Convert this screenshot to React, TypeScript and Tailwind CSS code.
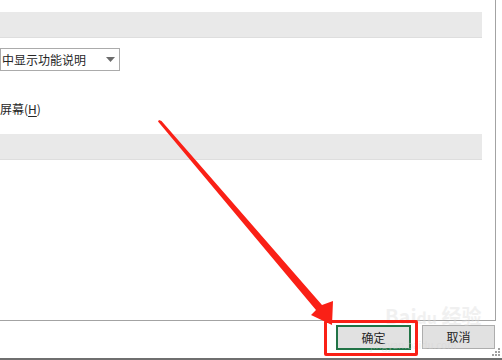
const cjk = { fontFamily: '"Noto Sans CJK SC", "Noto Sans", sans-serif' };

function Band() {
  return <div className="h-[26px] w-[482px] border-b border-[#dedede] bg-[#e9e9e9]" />;
}

function Arrow() {
  // red annotation arrow pointing at the OK button
  return (
    <svg className="pointer-events-none absolute left-0 top-0" width="502" height="360">
      <polygon
        points="159,120 161.5,121 322,305 333,301 332,325 311,315 316,310 158,121.5"
        fill="#fa2016"
      />
    </svg>
  );
}

export default function App() {
  return (
    <div className="relative flex h-[360px] w-[502px] flex-col overflow-hidden bg-white text-[#262626]" style={cjk}>
      {/* options panel */}
      <div className="h-[321px] w-[496px] shrink-0 border-b border-r border-[#a3a3a3] pt-[12px]">
        <Band />
        <div className="mt-[10px] flex h-[23px] w-[120px] items-center justify-between border border-[#ababab] pl-[1px] pr-[4px] text-[12px]">
          <span>中显示功能说明</span>
          <svg width="9" height="5" viewBox="0 0 9 5">
            <polygon points="0,0 9,0 4.5,5" fill="#6b6b6b" />
          </svg>
        </div>
        <div className="mt-[30px] text-[12px] leading-[15px]">
          屏幕(<span className="underline underline-offset-2">H</span>)
        </div>
        <div className="mt-[18px]">
          <Band />
        </div>
      </div>

      {/* buttons */}
      <div className="flex justify-end gap-[11px] pr-[7px] pt-[4px]">
        <button className="h-[25px] w-[75px] border-2 border-[#217346] bg-[#e1e1e1] text-[12px]">确定</button>
        <button className="h-[24px] w-[73px] border border-[#adadad] bg-[#e1e1e1] text-[12px]">取消</button>
      </div>
      <div className="mt-auto h-[2px] w-full bg-[#6f6f6f]" />

      {/* resize grip */}
      <div className="absolute bottom-[4px] right-[2px] grid grid-cols-3 gap-[1px]">
        {[0, 1, 2, 3, 4, 5, 6, 7, 8].map((i) => (
          <div key={i} className={`h-[2px] w-[2px] ${i === 0 || i === 1 || i === 3 ? "bg-transparent" : "bg-[#a0a0a0]"}`} />
        ))}
      </div>

      {/* watermark */}
      <div className="pointer-events-none absolute left-[385px] top-[306px] text-[20px] font-bold leading-none text-[#dcdcdc] opacity-40">
        Bai<span className="text-[16px]">du</span> 经验
      </div>
      <div className="pointer-events-none absolute left-[370px] top-[340px] text-[10px] leading-none text-[#d4d4d4] opacity-40">
        jingyan.baidu.com
      </div>

      {/* annotation */}
      <div className="absolute left-[324px] top-[320px] h-[36px] w-[94px] rounded-[2px] border-[3px] border-[#fa2016]" />
      <Arrow />
    </div>
  );
}
